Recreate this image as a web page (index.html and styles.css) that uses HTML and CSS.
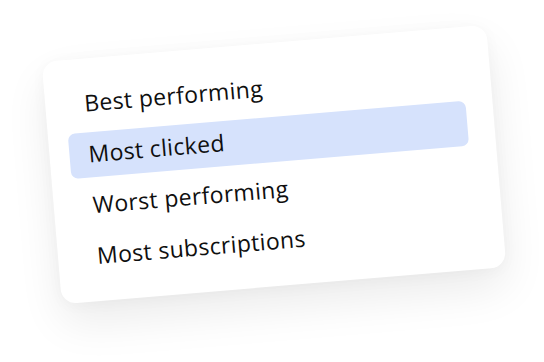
FILE: index.html
```html
<!DOCTYPE html>
<html>
<head>
<meta charset="utf-8">
<link rel="stylesheet" href="styles.css">
</head>
<body>
  <div class="stage">
    <div class="card">
      <ul class="menu">
        <li class="item">Best performing</li>
        <li class="item active">Most clicked</li>
        <li class="item">Worst performing</li>
        <li class="item">Most subscriptions</li>
      </ul>
    </div>
  </div>
</body>
</html>
```
FILE: styles.css
```css
html, body {
  margin: 0;
  padding: 0;
  background: #ffffff;
}
.stage {
  width: 544px;
  height: 362px;
  overflow: hidden;
  padding: 43px 0 0 51px;
  box-sizing: border-box;
}
.card {
  width: 446px;
  height: 243px;
  box-sizing: border-box;
  background: #ffffff;
  border-radius: 15px;
  padding: 23px 27px 22px 20px;
  transform: rotate(-4.8deg);
  box-shadow: 0 20px 44px rgba(0, 0, 0, 0.08), 0 2px 16px rgba(0, 0, 0, 0.03);
}
.menu {
  list-style: none;
  margin: 0;
  padding: 0;
  display: flex;
  flex-direction: column;
  gap: 6px;
}
.item {
  height: 45px;
  line-height: 43px;
  padding: 0 0 2px 19px;
  box-sizing: border-box;
  border-radius: 7px;
  font-family: "Open Sans", sans-serif;
  font-size: 23px;
  font-weight: 500;
  letter-spacing: 0.35px;
  color: #0f0f0f;
}
.item.active {
  background: #d6e2fc;
}
```
